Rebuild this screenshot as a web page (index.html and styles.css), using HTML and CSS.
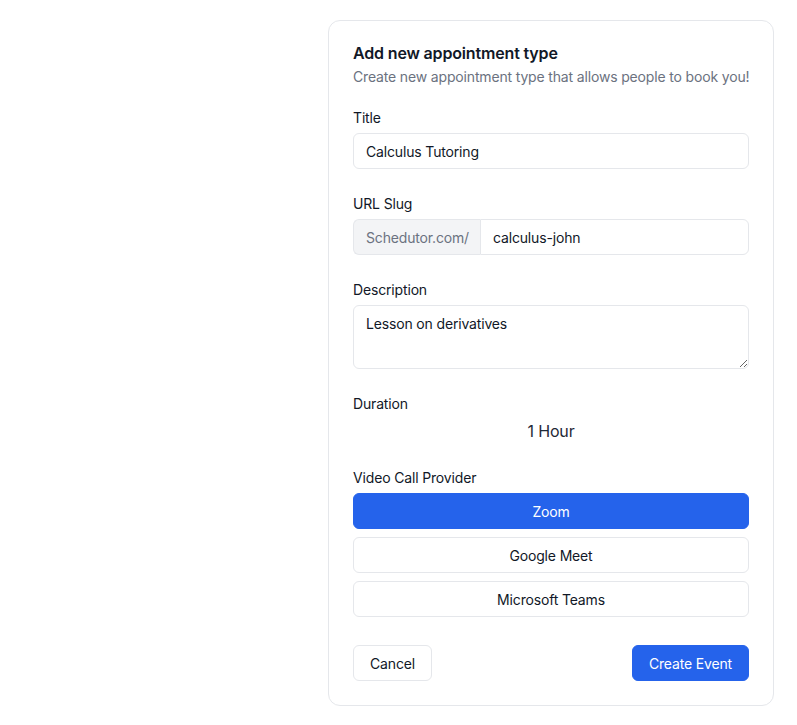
FILE: index.html
```html
<!DOCTYPE html>
<html>

<head>
    <meta charset="UTF-8">
    <title>Add new appointment type</title>
    <link rel="stylesheet" href="styles.css">
</head>

<body>
    <div class="page">
        <div class="card">
            <div class="card-head">
                <h1 class="card-title">Add new appointment type</h1>
                <p class="card-sub">Create new appointment type that allows people to book you!</p>
            </div>

            <form class="form">
                <div class="field">
                    <label class="label" for="title">Title</label>
                    <input class="input" id="title" type="text" value="Calculus Tutoring">
                </div>

                <div class="field">
                    <label class="label" for="slug">URL Slug</label>
                    <div class="input-group">
                        <span class="prefix">Schedutor.com/</span>
                        <input class="input grouped" id="slug" type="text" value="calculus-john">
                    </div>
                </div>

                <div class="field">
                    <label class="label" for="desc">Description</label>
                    <textarea class="input textarea" id="desc">Lesson on derivatives</textarea>
                </div>

                <div class="field">
                    <label class="label">Duration</label>
                    <div class="duration-value">1 Hour</div>
                </div>

                <div class="field">
                    <label class="label">Video Call Provider</label>
                    <div class="providers">
                        <button type="button" class="provider active">Zoom</button>
                        <button type="button" class="provider">Google Meet</button>
                        <button type="button" class="provider">Microsoft Teams</button>
                    </div>
                </div>

                <div class="actions">
                    <button type="button" class="btn btn-outline">Cancel</button>
                    <button type="button" class="btn btn-primary">Create Event</button>
                </div>
            </form>
        </div>
    </div>
</body>

</html>
```

FILE: styles.css
```css
body {
    margin: 0;
    background: #ffffff;
    font-family: "Inter", "Liberation Sans", sans-serif;
    letter-spacing: -0.01em;
    color: #111827;
}

.page {
    display: flex;
    justify-content: flex-end;
    padding: 20px 23px;
}

.card {
    width: 446px;
    box-sizing: border-box;
    padding: 20px 24px 24px;
    border: 1px solid #e5e7eb;
    border-radius: 12px;
    background: #ffffff;
}

.card-title {
    margin: 0;
    font-size: 16px;
    line-height: 24px;
    font-weight: 600;
    color: #111827;
}

.card-sub {
    margin: 2px 0 0;
    font-size: 14px;
    line-height: 20px;
    color: #6b7280;
    white-space: nowrap;
}

.form {
    display: flex;
    flex-direction: column;
    gap: 25px;
    margin-top: 21px;
}

.field {
    display: flex;
    flex-direction: column;
}

.label {
    margin-bottom: 5px;
    font-size: 14px;
    line-height: 20px;
    font-weight: 400;
    color: #111827;
}

.input {
    height: 36px;
    box-sizing: border-box;
    padding: 0 12px;
    border: 1px solid #e5e7eb;
    border-radius: 6px;
    background: #ffffff;
    font-family: inherit;
    font-size: 14px;
    letter-spacing: inherit;
    color: #111827;
    outline: none;
}

.input-group {
    display: flex;
}

.prefix {
    display: flex;
    align-items: center;
    width: 127px;
    box-sizing: border-box;
    padding: 0 12px;
    border: 1px solid #e5e7eb;
    border-right: none;
    border-radius: 6px 0 0 6px;
    background: #f3f4f6;
    font-size: 14px;
    color: #6b7280;
}

.input.grouped {
    flex: 1;
    min-width: 0;
    border-radius: 0 6px 6px 0;
}

.textarea {
    height: 64px;
    padding: 8px 12px;
    line-height: 20px;
    resize: vertical;
}

.duration-value {
    text-align: center;
    font-size: 16px;
    line-height: 24px;
    color: #1f2937;
}

.providers {
    display: flex;
    flex-direction: column;
    gap: 8px;
}

.provider {
    height: 36px;
    border: 1px solid #e5e7eb;
    border-radius: 6px;
    background: #ffffff;
    font-family: inherit;
    font-size: 14px;
    font-weight: 400;
    letter-spacing: inherit;
    color: #111827;
}

.provider.active {
    border-color: #2563eb;
    background: #2563eb;
    color: #ffffff;
}

.actions {
    display: flex;
    justify-content: space-between;
    margin-top: 3px;
}

.btn {
    height: 36px;
    padding: 0 16px;
    border: 1px solid #e5e7eb;
    border-radius: 6px;
    font-family: inherit;
    font-size: 14px;
    font-weight: 400;
    letter-spacing: inherit;
}

.btn-outline {
    background: #ffffff;
    color: #111827;
}

.btn-primary {
    border-color: #2563eb;
    background: #2563eb;
    color: #ffffff;
}
```
